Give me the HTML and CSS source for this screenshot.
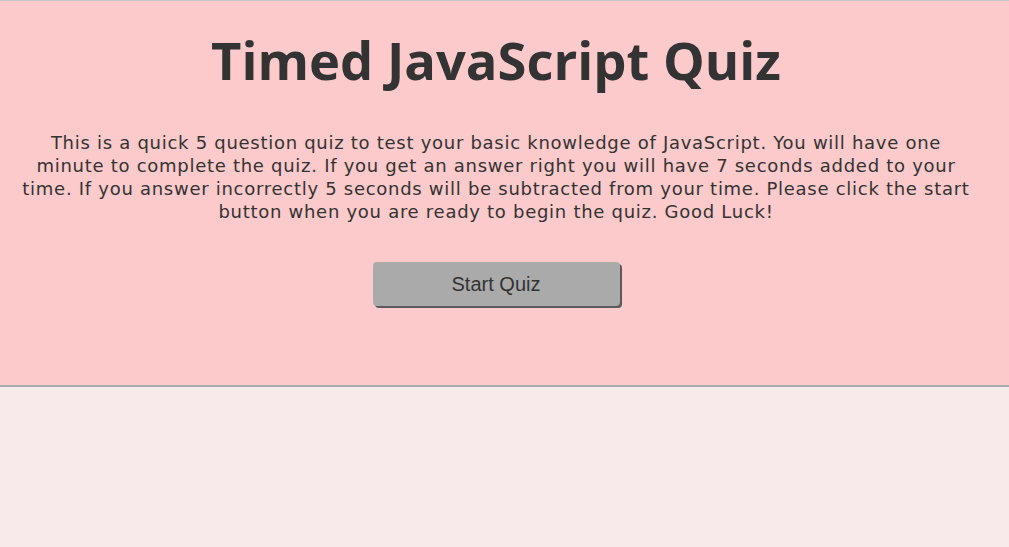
FILE: index.html
```html
<!DOCTYPE html>
<html>
<head>
<meta charset="utf-8">
<title>Timed JavaScript Quiz</title>
<link rel="stylesheet" href="styles.css">
</head>
<body>
<header class="hero">
  <h1 class="title">Timed JavaScript Quiz</h1>
  <p class="intro">This is a quick 5 question quiz to test your basic knowledge of JavaScript. You will have one minute to complete the quiz. If you get an answer right you will have 7 seconds added to your time. If you answer incorrectly 5 seconds will be subtracted from your time. Please click the start button when you are ready to begin the quiz. Good Luck!</p>
  <button class="start-btn">Start Quiz</button>
</header>
</body>
</html>
```
FILE: styles.css
```css
html, body {
  margin: 0;
  padding: 0;
  height: 100%;
}
body {
  background: #f8eaea;
  font-family: "DejaVu Sans", Verdana, sans-serif;
  color: #333;
}
.hero {
  background: #fccaca;
  border-top: 1px solid #c8c8c8;
  border-bottom: 2px solid #aaaaaa;
  box-sizing: border-box;
  height: 387px;
  padding-right: 17px;
  display: flex;
  flex-direction: column;
  align-items: center;
}
.title {
  margin: 30px 0 0;
  font-family: "Open Sans", "DejaVu Sans", sans-serif;
  font-size: 52.5px;
  line-height: 58px;
  font-weight: bold;
}
.intro {
  margin: 42px 0 0;
  width: 962px;
  font-size: 18px;
  line-height: 23px;
  letter-spacing: 0.72px;
  text-align: center;
}
.start-btn {
  margin-top: 39px;
  width: 247px;
  height: 44px;
  background: #aaaaaa;
  border: none;
  border-radius: 4px;
  box-shadow: 2px 2px 0 #5a5a5a;
  font-family: "Liberation Sans", Arial, sans-serif;
  font-size: 20px;
  color: #333;
  cursor: pointer;
}
```
